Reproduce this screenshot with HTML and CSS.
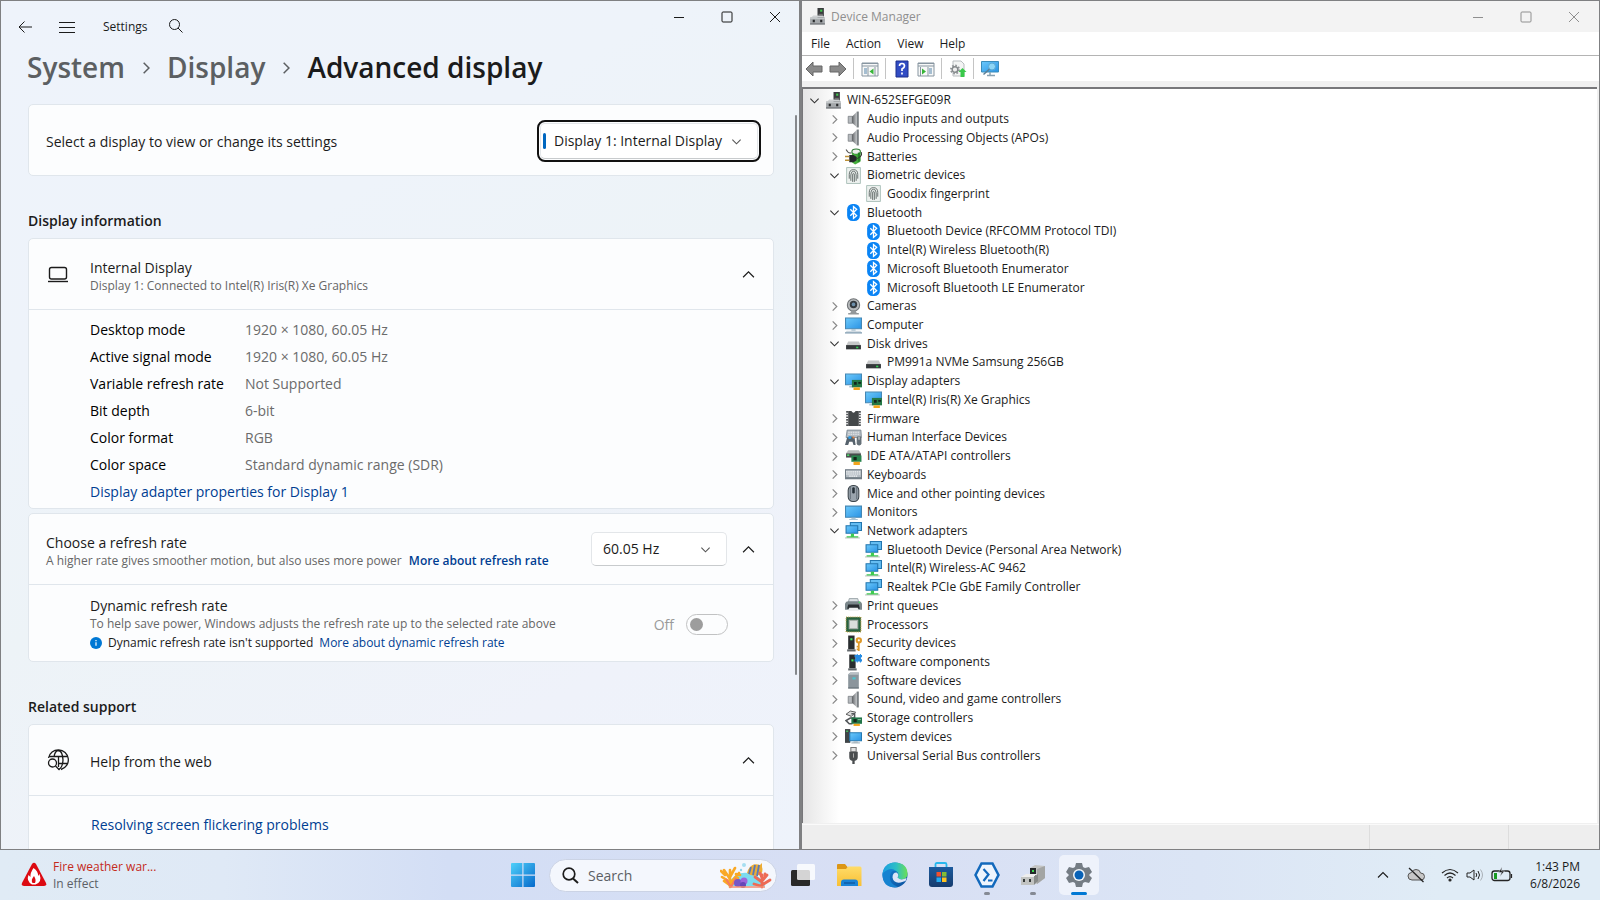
FILE: index.html
```html
<!DOCTYPE html>
<html lang="en">
<head>
<meta charset="utf-8">
<title>Desktop</title>
<link rel="stylesheet" href="styles.css">
</head>
<body>
<svg class="sprite" aria-hidden="true">
  <defs>
    <linearGradient id="gScreen" x1="0" y1="0" x2="1" y2="1"><stop offset="0" stop-color="#6cc9fb"/><stop offset="1" stop-color="#2a93e4"/></linearGradient>
    <linearGradient id="gMetal" x1="0" y1="0" x2="1" y2="0"><stop offset="0" stop-color="#5d6063"/><stop offset="1" stop-color="#c3c6c9"/></linearGradient>
    <linearGradient id="gStart" x1="0" y1="0" x2="1" y2="1"><stop offset="0" stop-color="#4fd0fa"/><stop offset="1" stop-color="#0669cb"/></linearGradient>
    <linearGradient id="gFolder" x1="0" y1="0" x2="0" y2="1"><stop offset="0" stop-color="#ffdc68"/><stop offset="1" stop-color="#f8bf35"/></linearGradient>
    <linearGradient id="gEdge" x1="0" y1="0" x2="1" y2="0"><stop offset="0" stop-color="#1b9de2"/><stop offset=".55" stop-color="#2dbfc5"/><stop offset="1" stop-color="#6bdf54"/></linearGradient>
    <linearGradient id="gEdgeLow" x1="0" y1="0" x2="1" y2="1"><stop offset="0" stop-color="#1688d8"/><stop offset="1" stop-color="#0b4f9c"/></linearGradient>
    <linearGradient id="gStore" x1="0" y1="0" x2="0" y2="1"><stop offset="0" stop-color="#1c5b9e"/><stop offset="1" stop-color="#173c6e"/></linearGradient>
  </defs>
  <symbol id="chev-up" viewBox="0 0 12 12"><path d="M1 8.500 6 3.500l5 5" fill="none" stroke="currentColor" stroke-width="1.100"/></symbol>
  <symbol id="chev-down" viewBox="0 0 12 12"><path d="m1.500 4 4.500 4.500L10.500 4" fill="none" stroke="currentColor" stroke-width="1.200"/></symbol>
  <symbol id="chev-right" viewBox="0 0 12 12"><path d="m4 1.500 4.500 4.500L4 10.500" fill="none" stroke="currentColor" stroke-width="1.300"/></symbol>
  <symbol id="win-min" viewBox="0 0 12 12"><path d="M1 6.500h10" stroke="currentColor"/></symbol>
  <symbol id="win-max" viewBox="0 0 12 12"><rect x="1" y="1" width="10" height="10" rx="1" fill="none" stroke="currentColor"/></symbol>
  <symbol id="win-close" viewBox="0 0 12 12"><path d="m1 1 10 10M11 1 1 11" stroke="currentColor"/></symbol>
  <symbol id="i-pc" viewBox="0 0 16 16"><path d="M8 0h6v10H8z" fill="#3a3c3e"/><path d="M10.500 1.500h2v2h-2z" fill="#41c64e"/><path d="M9 6h4" stroke="#777"/><path d="M2 9 4 7h9l2 2z" fill="#cfd2d4"/><path d="M1 9h14v6.500H1z" fill="#a4a8ab"/><path d="M1 9h14v1.500H1z" fill="#c4c8ca"/><path d="M3.500 11h2v2.500h-2zM10.500 11h2v2.500h-2z" fill="#292b2d"/><path d="M1 15h14" stroke="#696d70"/></symbol>
  <symbol id="i-audio" viewBox="0 0 16 16"><path d="M3 5h4v6.500H3z" fill="#b5b9bd" stroke="#777b80" stroke-width=".7"/><path d="M6.500 5.500 11 1v14l-4.500-4z" fill="url(#gMetal)"/><path d="M11 .5h2v15h-2z" fill="#7b8084"/></symbol>
  <symbol id="i-battery" viewBox="0 0 16 16"><ellipse cx="10.500" cy="3.500" rx="4" ry="2.500" fill="#eee" stroke="#2f7d35"/><path d="M6.500 4.500v9l3 2 5-2.500V4.500q-3.500 3-8 0" fill="#46ae3d"/><path d="M12 4.500v9l2.500-1.500V4z" fill="#238228"/><path d="M1 1.500q2 4 5 3" stroke="#555" fill="none"/><path d="M4 6.500h4l3 2v3l-3 2H4z" fill="#24272a"/><path d="M0 8h4M0 11.500h4" stroke="#bd9137" stroke-width="1.300"/><path d="M15.500 4q1 4-4 6" stroke="#333" fill="none"/></symbol>
  <symbol id="i-finger" viewBox="0 0 16 16"><path d="M1.500.5h13v15h-13z" fill="#edf1ef" stroke="#a3bab4" stroke-width=".8"/><path d="M4 11V7q0-4.500 4-4.500T12 7v4M5.500 13V7.500Q5.500 4 8 4t2.500 3.500V13M7.200 14V7.500q0-1.500.8-1.500t.8 1.500V14" fill="none" stroke="#626b69" stroke-width=".9"/></symbol>
  <symbol id="i-bt" viewBox="0 0 16 16"><rect x="2" y="0" width="12" height="16" rx="5" fill="#0a84f5"/><path d="m5 5 6 6-3 2.500v-11L11 5l-6 6" fill="none" stroke="#fff" stroke-width="1.200"/></symbol>
  <symbol id="i-camera" viewBox="0 0 16 16"><circle cx="8" cy="6.500" r="5.800" fill="#b7babc" stroke="#707477"/><circle cx="8" cy="6.200" r="3.500" fill="#34393e"/><circle cx="8" cy="6" r="1.700" fill="#6d8fab"/><path d="m6 12-1 2h6l-1-2zM3 14h10v1.500H3z" fill="#94989a"/></symbol>
  <symbol id="i-computer" viewBox="0 0 16 16"><path d="M.5 1h15v10H.5z" fill="url(#gScreen)" stroke="#4487b4"/><path d="M6 11.500h4v1.500H6z" fill="#aac0cf"/><path d="M1.500 13h13l1.500 2H0z" fill="#d0dae2"/><path d="M0 15h16" stroke="#7291a8"/></symbol>
  <symbol id="i-disk" viewBox="0 0 16 16"><path d="M3 6h10l2 4H1z" fill="#c6c8c9"/><path d="M1 9.500h14v4H1z" fill="#34383a"/><path d="M10.500 11h2v1.500h-2z" fill="#33d355"/></symbol>
  <symbol id="i-display" viewBox="0 0 16 16"><path d="M.5 1h15v10H.5z" fill="url(#gScreen)" stroke="#4487b4"/><path d="M4 13h4" stroke="#91acbf"/><path d="M6.500 6.500H16v7H6.500z" fill="#257846"/><path d="M8.500 8.500h2.500V11H8.500zM12.500 8.500H15V10h-2.500z" fill="#15251c"/><path d="M8 13.500h6V16H8z" fill="#f2a51d"/></symbol>
  <symbol id="i-firmware" viewBox="0 0 16 16"><path d="M3 1h3q2 3 4 0h3v14H3z" fill="#44484a"/><path d="M2 1v14M14 1v14" stroke="#515558" stroke-width="1.800" stroke-dasharray="1.500 1"/></symbol>
  <symbol id="i-hid" viewBox="0 0 16 16"><path d="M2 1h13l.5 7H1z" fill="#b3bbc2" stroke="#72808b" stroke-width=".7"/><path d="M3 3h11M3 5h11" stroke="#e6e9ec" stroke-dasharray="1.500 .7"/><path d="M2 8q4-2 7 0l1 7H8L7 12H4L3 15H0z" fill="#56626c"/><circle cx="4.500" cy="8" r="1.500" fill="#309be1"/><circle cx="8" cy="8" r="1" fill="#e98242"/><rect x="11" y="6.500" width="4.500" height="9" rx="2" fill="#657078"/><path d="M13.200 7v3" stroke="#d3dadd"/></symbol>
  <symbol id="i-ide" viewBox="0 0 16 16"><path d="M3 2h10l2 3H1z" fill="#b9bdbd"/><path d="M1 5h14v4H1z" fill="#484c4d"/><path d="M2 6h2v1.500H2z" fill="#4de06a"/><path d="M6 7h9.500v6H6z" fill="#27844c"/><path d="M8 8.500h3v3H8z" fill="#14261a"/><path d="M8 13h6v3H8z" fill="#f2a51d"/></symbol>
  <symbol id="i-keyboard" viewBox="0 0 16 16"><path d="M0 3h16v9.500H0z" fill="#717c85"/><path d="M1 4h14v6.500H1z" fill="#b5bdc4"/><path d="M1 5.500h14M1 7.500h14M4 9.500h8" stroke="#f2f4f6" stroke-dasharray="1.400 .6"/></symbol>
  <symbol id="i-mouse" viewBox="0 0 16 16"><rect x="3" y=".5" width="10" height="15" rx="4.500" fill="#9aa4ad" stroke="#3c444b"/><path d="M5 1.500v12M11 1.500v12" stroke="#66717a"/><rect x="6.800" y="2" width="2.400" height="6" rx="1.200" fill="#263038"/></symbol>
  <symbol id="i-monitor" viewBox="0 0 16 16"><path d="M.5 2h15v10.500H.5z" fill="url(#gScreen)" stroke="#4487b4"/><path d="M6 13h4v1H6zM4 14h8v1H4z" fill="#abc4d4"/></symbol>
  <symbol id="i-network" viewBox="0 0 16 16"><path d="M5 .5h10.500v7.500H5z" fill="#65bdf2" stroke="#2275ae"/><path d="M1 3.500h11v7H1z" fill="url(#gScreen)" stroke="#2275ae"/><path d="M5.500 11h3v2.500h4V15h-11v-1.500h4z" fill="#3ecb50"/><path d="M0 15h14" stroke="#bac5bd"/></symbol>
  <symbol id="i-printer" viewBox="0 0 16 16"><path d="M4 1.500h8l1 4H3z" fill="#dce1e4" stroke="#849095" stroke-width=".7"/><path d="M0 6q1-2 3-2h10q2 0 3 2v6H0z" fill="#7b878b"/><path d="M3 7h10l1 4H2z" fill="#292e31"/><path d="M4 10h8l1 3H3z" fill="#ebeeee"/><circle cx="13.500" cy="5" r=".8" fill="#47db64"/></symbol>
  <symbol id="i-cpu" viewBox="0 0 16 16"><path d="M1 1h14v14H1z" fill="#28623f" stroke="#c3a74d" stroke-dasharray="1 1"/><path d="M4 4h8v8H4z" fill="#dadddb" stroke="#a5aca8"/></symbol>
  <symbol id="i-security" viewBox="0 0 16 16"><path d="M3 .5h6v13H3z" fill="#292d2f"/><path d="M5 3h2v2H5z" fill="#41e65d"/><path d="M2 14.500h8" stroke="#63696d" stroke-width="2"/><circle cx="13" cy="5" r="2" fill="none" stroke="#df9a2a" stroke-width="2"/><path d="M13 7v8M13 11h-2M13 13.500h-2" stroke="#df9a2a" stroke-width="1.600"/></symbol>
  <symbol id="i-component" viewBox="0 0 16 16"><path d="M4 .5h6v13H4z" fill="#292d2f"/><path d="M6 5h2v2H6z" fill="#41e65d"/><path d="M3 14.500h8" stroke="#63696d" stroke-width="2"/><path d="M9 1h2V0h1v1h2V0h1v1h1v2h-1v2h1v2h-1v1h-1V7h-2v1h-1V7H9V5h1V3H9z" fill="#268be2"/></symbol>
  <symbol id="i-device" viewBox="0 0 16 16"><path d="M5 .5h8v15H3V2z" fill="#8b959c"/><path d="M5 .5h8v2H3z" fill="#b9c0c5"/><path d="M7 5h3v2H7z" fill="#4dc4cf"/><path d="M3 15h10" stroke="#657078"/></symbol>
  <symbol id="i-storage" viewBox="0 0 16 16"><path d="m1 4 4-3 5 1-4 4z" fill="#ddd" stroke="#444" stroke-width=".8"/><path d="M6 3.500h3v4H5L1 10l3 3h3" fill="none" stroke="#54585b" stroke-width="1.500"/><path d="M6 7h10v6H6z" fill="#217548"/><path d="M8 8.500h3v3H8z" fill="#14261a"/><path d="M12 9h3" stroke="#87bc98"/><path d="M8 13h6v2H8z" fill="#f2a51d"/></symbol>
  <symbol id="i-system" viewBox="0 0 16 16"><path d="M0 1h5v13H0z" fill="#404548"/><path d="M1 3h2" stroke="#4de06a"/><path d="M4.500 4.500h11V12h-11z" fill="url(#gScreen)" stroke="#2579b2"/><path d="M8 12.500h4v1H8zM6 13.500h8v1H6z" fill="#acb9c1"/></symbol>
  <symbol id="i-usb" viewBox="0 0 16 16"><path d="M5.500.5h5v4h-5z" fill="#e1e1e1" stroke="#777"/><path d="M4 4.500h8v5q0 3-2.500 3.500h-3Q4 12.500 4 9.500z" fill="#4a4d4f"/><path d="M8 12v4" stroke="#4a4d4f" stroke-width="2.200"/><path d="M8 6v4" stroke="#aaa"/></symbol>
</svg>

<div class="desktop">
  <main class="settings">
    <header class="s-title">
      <button class="plain nav-back" aria-label="Back"><svg width="14" height="14" viewBox="0 0 14 14"><path d="M14 7H1M6.500 1.500 1 7l5.500 5.500" fill="none" stroke="currentColor"/></svg></button>
      <button class="plain nav-menu" aria-label="Navigation"><svg width="16" height="14" viewBox="0 0 16 14"><path d="M0 2.500h16M0 7.500h16M0 12.500h16" stroke="currentColor"/></svg></button>
      <span class="s-name">Settings</span>
      <button class="plain nav-search" aria-label="Search"><svg width="14" height="14" viewBox="0 0 14 14"><circle cx="5.500" cy="5.500" r="5" fill="none" stroke="currentColor"/><path d="m9 9 4.500 4.500" stroke="currentColor"/></svg></button>
      <div class="controls">
        <button aria-label="Minimize"><svg><use href="#win-min"/></svg></button>
        <button aria-label="Maximize"><svg><use href="#win-max"/></svg></button>
        <button aria-label="Close"><svg><use href="#win-close"/></svg></button>
      </div>
    </header>
    <h1 class="crumbs">
      <a href="#system">System</a>
      <svg width="14" height="14"><use href="#chev-right"/></svg>
      <a href="#display">Display</a>
      <svg width="14" height="14"><use href="#chev-right"/></svg>
      <span>Advanced display</span>
    </h1>
    <div class="s-body">
      <section class="card">
        <div class="card-head">
          <label class="grow" for="pick">Select a display to view or change its settings</label>
          <div class="combo focus"><select id="pick"><option>Display 1: Internal Display</option></select><svg><use href="#chev-down"/></svg></div>
        </div>
      </section>

      <h2>Display information</h2>
      <section class="card">
        <div class="card-head">
          <svg class="lead" viewBox="0 0 22 22"><rect x="2.500" y="4.500" width="17" height="11.500" rx="2" fill="none" stroke="currentColor" stroke-width="1.400"/><path d="M1 18.500h20" stroke="currentColor" stroke-width="1.400"/></svg>
          <div class="grow"><div>Internal Display</div><div class="sub">Display 1: Connected to Intel(R) Iris(R) Xe Graphics</div></div>
          <button class="plain fold" aria-label="Collapse display"><svg><use href="#chev-up"/></svg></button>
        </div>
        <div class="details">
          <dl>
            <dt>Desktop mode</dt><dd>1920 × 1080, 60.05 Hz</dd>
            <dt>Active signal mode</dt><dd>1920 × 1080, 60.05 Hz</dd>
            <dt>Variable refresh rate</dt><dd>Not Supported</dd>
            <dt>Bit depth</dt><dd>6-bit</dd>
            <dt>Color format</dt><dd>RGB</dd>
            <dt>Color space</dt><dd>Standard dynamic range (SDR)</dd>
          </dl>
          <a href="#adapter">Display adapter properties for Display 1</a>
        </div>
      </section>

      <section class="card next">
        <div class="card-head">
          <div class="grow"><label for="rate">Choose a refresh rate</label><div class="sub">A higher rate gives smoother motion, but also uses more power <a class="strong" href="#rate-info">More about refresh rate</a></div></div>
          <div class="combo rate"><select id="rate"><option>60.05 Hz</option></select><svg><use href="#chev-down"/></svg></div>
          <button class="plain fold" aria-label="Collapse refresh rate"><svg><use href="#chev-up"/></svg></button>
        </div>
        <div class="dynamic">
          <div class="grow">
            <label for="drr">Dynamic refresh rate</label>
            <div class="sub">To help save power, Windows adjusts the refresh rate up to the selected rate above</div>
            <div class="note"><svg width="12" height="12" viewBox="0 0 12 12"><circle cx="6" cy="6" r="6" fill="#0078d4"/><path d="M6 5.300v3.500M6 3v1.200" stroke="#fff" stroke-width="1.200"/></svg><span>Dynamic refresh rate isn't supported</span><a href="#drr-info">More about dynamic refresh rate</a></div>
          </div>
          <span class="off">Off</span>
          <input id="drr" class="switch" type="checkbox" role="switch" disabled>
        </div>
      </section>

      <h2>Related support</h2>
      <section class="card">
        <div class="card-head">
          <svg class="lead" viewBox="0 0 22 22" fill="none" stroke="currentColor" stroke-width="1.300"><path d="M1.500 9A10 10 0 1 1 14 20.500M1.800 7.500h18.500M11 14.500h9M7 8Q8 1.500 11.500 1.500 15.500 2 16 11q-.5 8-4.500 9.500M11.500 8v10"/><circle cx="5.500" cy="14" r="4"/><path d="m8.500 17 4 4"/></svg>
          <div class="grow">Help from the web</div>
          <button class="plain fold" aria-label="Collapse help"><svg><use href="#chev-up"/></svg></button>
        </div>
        <div class="help"><a href="#flicker">Resolving screen flickering problems</a></div>
      </section>
    </div>
    <div class="scroll-thumb"></div>
  </main>

  <section class="devmgr">
    <header class="d-title">
      <svg class="ico"><use href="#i-pc"/></svg><span>Device Manager</span>
      <div class="controls">
        <button aria-label="Minimize"><svg><use href="#win-min"/></svg></button>
        <button aria-label="Maximize"><svg><use href="#win-max"/></svg></button>
        <button aria-label="Close"><svg><use href="#win-close"/></svg></button>
      </div>
    </header>
    <nav class="menu"><button>File</button><button>Action</button><button>View</button><button>Help</button></nav>
    <div class="tools">
      <button aria-label="Back"><svg width="18" height="18" viewBox="0 0 18 18"><path d="M1 9 8 2v4h9v6H8v4z" fill="#8a8a8a" stroke="#666"/></svg></button>
      <button aria-label="Forward"><svg width="18" height="18" viewBox="0 0 18 18"><path d="m17 9-7-7v4H1v6h9v4z" fill="#8a8a8a" stroke="#666"/></svg></button>
      <i></i>
      <button aria-label="Console tree"><svg width="18" height="18" viewBox="0 0 18 18"><path d="M1 3h16v13H1z" fill="#f7f8f8" stroke="#8795a0"/><path d="M1 3.500h16M1 6h16" stroke="#8795a0"/><path d="M3 9h3M3 11h3M3 13h3" stroke="#5484aa"/><path d="M7 7v9M14 7v9" stroke="#8795a0"/><path d="M12.500 8.500v6L8.500 11.500z" fill="#37b538"/></svg></button>
      <i></i>
      <button aria-label="Help"><svg width="18" height="18" viewBox="0 0 18 18"><path d="M3 1h12v16H3z" fill="#314cc4" stroke="#1c2f8c"/><path d="M6.500 6q0-2.500 2.500-2.500T11.500 6Q11.500 7.500 9 9v2M9 12.500v2" fill="none" stroke="#fff" stroke-width="1.700"/></svg></button>
      <button aria-label="Action pane"><svg width="18" height="18" viewBox="0 0 18 18"><path d="M1 3h16v13H1z" fill="#f7f8f8" stroke="#8795a0"/><path d="M1 3.500h16M1 6h16M11 7v9M3.500 7v9" stroke="#8795a0"/><path d="M12 9h3M12 11h3M12 13h3" stroke="#5484aa"/><path d="M5 8.500v6l4-3z" fill="#37b538"/></svg></button>
      <i></i>
      <button aria-label="Update driver"><svg width="18" height="18" viewBox="0 0 18 18"><path d="M4 1h8l3 3v12H4z" fill="#f3f4f4" stroke="#b9bdc0"/><circle cx="6" cy="9.500" r="4" fill="none" stroke="#909497" stroke-width="2" stroke-dasharray="1.600 1.500"/><circle cx="6" cy="9.500" r="2.800" fill="#eee" stroke="#85898c" stroke-width="1.400"/><path d="m13.500 8 4 4h-2v5h-4v-5h-2z" fill="#39c94a"/></svg></button>
      <i></i>
      <button aria-label="Scan for hardware changes"><svg width="18" height="18" viewBox="0 0 18 18"><path d="M.5 1.500h17v10.500H.5z" fill="url(#gScreen)" stroke="#3b8dbb"/><circle cx="11" cy="6.500" r="3.500" fill="#8ed6f6" stroke="#5aa9d3"/><path d="m8.500 9-6 5.500" stroke="#5d7f95" stroke-width="1.500"/><path d="M9 12v3M6 15.500h8" stroke="#89a1b0" stroke-width="1.500"/></svg></button>
    </div>
    <div class="pane">
      <ul class="tree" role="tree">
        <li class="l0 open"><button aria-label="Collapse"><svg><use href="#chev-down"/></svg></button><svg class="ico"><use href="#i-pc"/></svg><span>WIN-652SEFGE09R</span></li>
        <li><button aria-label="Expand"><svg><use href="#chev-right"/></svg></button><svg class="ico"><use href="#i-audio"/></svg><span>Audio inputs and outputs</span></li>
        <li><button aria-label="Expand"><svg><use href="#chev-right"/></svg></button><svg class="ico"><use href="#i-audio"/></svg><span>Audio Processing Objects (APOs)</span></li>
        <li><button aria-label="Expand"><svg><use href="#chev-right"/></svg></button><svg class="ico"><use href="#i-battery"/></svg><span>Batteries</span></li>
        <li class="open"><button aria-label="Collapse"><svg><use href="#chev-down"/></svg></button><svg class="ico"><use href="#i-finger"/></svg><span>Biometric devices</span></li>
        <li class="l2"><svg class="ico"><use href="#i-finger"/></svg><span>Goodix fingerprint</span></li>
        <li class="open"><button aria-label="Collapse"><svg><use href="#chev-down"/></svg></button><svg class="ico"><use href="#i-bt"/></svg><span>Bluetooth</span></li>
        <li class="l2"><svg class="ico"><use href="#i-bt"/></svg><span>Bluetooth Device (RFCOMM Protocol TDI)</span></li>
        <li class="l2"><svg class="ico"><use href="#i-bt"/></svg><span>Intel(R) Wireless Bluetooth(R)</span></li>
        <li class="l2"><svg class="ico"><use href="#i-bt"/></svg><span>Microsoft Bluetooth Enumerator</span></li>
        <li class="l2"><svg class="ico"><use href="#i-bt"/></svg><span>Microsoft Bluetooth LE Enumerator</span></li>
        <li><button aria-label="Expand"><svg><use href="#chev-right"/></svg></button><svg class="ico"><use href="#i-camera"/></svg><span>Cameras</span></li>
        <li><button aria-label="Expand"><svg><use href="#chev-right"/></svg></button><svg class="ico"><use href="#i-computer"/></svg><span>Computer</span></li>
        <li class="open"><button aria-label="Collapse"><svg><use href="#chev-down"/></svg></button><svg class="ico"><use href="#i-disk"/></svg><span>Disk drives</span></li>
        <li class="l2"><svg class="ico"><use href="#i-disk"/></svg><span>PM991a NVMe Samsung 256GB</span></li>
        <li class="open"><button aria-label="Collapse"><svg><use href="#chev-down"/></svg></button><svg class="ico"><use href="#i-display"/></svg><span>Display adapters</span></li>
        <li class="l2"><svg class="ico"><use href="#i-display"/></svg><span>Intel(R) Iris(R) Xe Graphics</span></li>
        <li><button aria-label="Expand"><svg><use href="#chev-right"/></svg></button><svg class="ico"><use href="#i-firmware"/></svg><span>Firmware</span></li>
        <li><button aria-label="Expand"><svg><use href="#chev-right"/></svg></button><svg class="ico"><use href="#i-hid"/></svg><span>Human Interface Devices</span></li>
        <li><button aria-label="Expand"><svg><use href="#chev-right"/></svg></button><svg class="ico"><use href="#i-ide"/></svg><span>IDE ATA/ATAPI controllers</span></li>
        <li><button aria-label="Expand"><svg><use href="#chev-right"/></svg></button><svg class="ico"><use href="#i-keyboard"/></svg><span>Keyboards</span></li>
        <li><button aria-label="Expand"><svg><use href="#chev-right"/></svg></button><svg class="ico"><use href="#i-mouse"/></svg><span>Mice and other pointing devices</span></li>
        <li><button aria-label="Expand"><svg><use href="#chev-right"/></svg></button><svg class="ico"><use href="#i-monitor"/></svg><span>Monitors</span></li>
        <li class="open"><button aria-label="Collapse"><svg><use href="#chev-down"/></svg></button><svg class="ico"><use href="#i-network"/></svg><span>Network adapters</span></li>
        <li class="l2"><svg class="ico"><use href="#i-network"/></svg><span>Bluetooth Device (Personal Area Network)</span></li>
        <li class="l2"><svg class="ico"><use href="#i-network"/></svg><span>Intel(R) Wireless-AC 9462</span></li>
        <li class="l2"><svg class="ico"><use href="#i-network"/></svg><span>Realtek PCIe GbE Family Controller</span></li>
        <li><button aria-label="Expand"><svg><use href="#chev-right"/></svg></button><svg class="ico"><use href="#i-printer"/></svg><span>Print queues</span></li>
        <li><button aria-label="Expand"><svg><use href="#chev-right"/></svg></button><svg class="ico"><use href="#i-cpu"/></svg><span>Processors</span></li>
        <li><button aria-label="Expand"><svg><use href="#chev-right"/></svg></button><svg class="ico"><use href="#i-security"/></svg><span>Security devices</span></li>
        <li><button aria-label="Expand"><svg><use href="#chev-right"/></svg></button><svg class="ico"><use href="#i-component"/></svg><span>Software components</span></li>
        <li><button aria-label="Expand"><svg><use href="#chev-right"/></svg></button><svg class="ico"><use href="#i-device"/></svg><span>Software devices</span></li>
        <li><button aria-label="Expand"><svg><use href="#chev-right"/></svg></button><svg class="ico"><use href="#i-audio"/></svg><span>Sound, video and game controllers</span></li>
        <li><button aria-label="Expand"><svg><use href="#chev-right"/></svg></button><svg class="ico"><use href="#i-storage"/></svg><span>Storage controllers</span></li>
        <li><button aria-label="Expand"><svg><use href="#chev-right"/></svg></button><svg class="ico"><use href="#i-system"/></svg><span>System devices</span></li>
        <li><button aria-label="Expand"><svg><use href="#chev-right"/></svg></button><svg class="ico"><use href="#i-usb"/></svg><span>Universal Serial Bus controllers</span></li>
      </ul>
    </div>
    <footer class="status"><span></span><span></span><span></span></footer>
  </section>

  <footer class="taskbar">
    <button class="widget">
      <svg width="26" height="26" viewBox="0 0 26 26"><path d="M11 2q2-2.500 4 0l10 19q1 3-2 3H3q-3 0-2-3z" fill="#dc0a12"/><path d="M12.500 6q5 3.500 4.500 8l1.500-2q3 8-4 10.500H11Q5 19 7.500 13l2 2q-.5-4 3-9" fill="#fff"/><path d="M13 14q2.500 4 1 7h-2.500q-2-3 1.500-7" fill="#dc0a12"/></svg>
      <span><b>Fire weather war...</b><small>In effect</small></span>
    </button>
    <div class="apps">
      <button aria-label="Start"><svg viewBox="0 0 26 26"><path d="M2 1h10.300v11.500H1V2q0-1 1-1M13.500 1H24q1 0 1 1v10.500H13.500zM1 13.700h11.300V25H2q-1 0-1-1zM13.500 13.700H25V24q0 1-1 1H13.500z" fill="url(#gStart)"/></svg></button>
      <label class="find">
        <svg width="17" height="17" viewBox="0 0 17 17"><circle cx="7" cy="7" r="5.800" fill="none" stroke="#1c1c1c" stroke-width="1.700"/><path d="m11 11.500 5 4.500" stroke="#1c1c1c" stroke-width="2"/></svg>
        <input type="text" placeholder="Search" aria-label="Search">
        <svg width="52" height="28" viewBox="0 0 52 28"><path d="M8 25q6-17 25-12 10 4 12 12z" fill="#7bdcf0"/><circle cx="24" cy="4" r="2" fill="#a6def1"/><circle cx="21" cy="9" r="1.200" fill="#8fd3ed"/><path d="M10 26V9M10 18 4 9M10 21l-8-5M10 16l5-9M11 21l8-9M4 20l7 5M18 17l-7 7M5 14 1 10M16 13l4 1" stroke="#f9a825" stroke-width="2.600" stroke-linecap="round"/><path d="m11 26-5-8M11 26l5-9" stroke="#f5795f" stroke-width="2"/><circle cx="18" cy="22" r="4" fill="#7657c6"/><circle cx="24" cy="20" r="3.500" fill="#9c66dc"/><circle cx="23" cy="24" r="3" fill="#6547b7"/><path d="M28 9q4-8 12-5l2-2v4q2 5-3 8-7 2-12-2z" fill="#ecac34"/><path d="m31 6-2 7M35 4l-2 10M39 4l-2 11" stroke="#5b78b5" stroke-width="1.800"/><path d="M42 26V14M42 21l-7-5M42 20l5-6M42 24l8-5M41 25l-7-2M42 17l-2-5M45 16v-3" stroke="#ed6b55" stroke-width="2.800" stroke-linecap="round"/><path d="M9 26h36" stroke="#f18d72" stroke-width="1.500"/></svg>
      </label>
      <button aria-label="Task view"><svg viewBox="0 0 26 26"><rect x="1" y="8" width="19" height="16" rx="1.500" fill="#292929"/><rect x="7" y="2" width="18" height="16" rx="1.500" fill="#fff" fill-opacity=".8"/></svg></button>
      <button aria-label="File Explorer"><svg viewBox="0 0 26 26"><path d="M1 3q0-1 1-1h7l2.500 3H17v5H1z" fill="#dc9616"/><path d="M1 7h9l2-2.500h12q1.500 0 1.500 1.500v18H1z" fill="url(#gFolder)"/><path d="M5 24v-3.500q0-3 3-3h11q3 0 3 3V24z" fill="#1a83d6"/><path d="M8 21h11" stroke="#1263ad" stroke-width="1.800"/></svg></button>
      <button aria-label="Edge"><svg viewBox="0 0 26 26"><circle cx="13" cy="13" r="12.500" fill="url(#gEdgeLow)"/><path d="M.5 13Q1 1 13 .5 25.500 1 25.500 12c0 6-9 7-10 3.500 2-2 1-7-4-7Q4 8.500.5 13" fill="url(#gEdge)"/><path d="M1 11Q9 4 14 9q-5-1-6 5-1 8 8 11Q1 27 .5 13z" fill="#1683d1"/><path d="M15.500 15.500q2-3-1-5-4 0-4 5 1 6 8 5l5-1.500q1-2 1-3-6 3-9-.5" fill="#dce5f7"/></svg></button>
      <button aria-label="Store"><svg viewBox="0 0 26 26"><path d="M7.500 6V2.500q0-1.500 1.500-1.500h8q1.500 0 1.500 1.500V6" fill="none" stroke="#27b7ed" stroke-width="1.800"/><path d="M1 5h24v17q0 3-3 3H4q-3 0-3-3z" fill="url(#gStore)"/><path d="M8.500 10H13v4.500H8.500z" fill="#f2502d"/><path d="M14 10h4.500v4.500H14z" fill="#83bd35"/><path d="M8.500 15.500H13V20H8.500z" fill="#24aaf0"/><path d="M14 15.500h4.500V20H14z" fill="#ffc321"/></svg></button>
      <button class="running" aria-label="Configuration designer"><svg viewBox="0 0 26 26"><path d="M7.500 1.500h11L24.500 13l-6 11.500h-11L1.500 13z" fill="#eef5fd" stroke="#1269bc" stroke-width="2.500"/><path d="m9.500 7 5 5.500-5 6.500M14 18.500h4.500" fill="none" stroke="#1269bc" stroke-width="2.200"/></svg></button>
      <button class="running" aria-label="Device Manager"><svg viewBox="0 0 26 26"><path d="m10 6 5-3 10 1v12l-8 6-6-2z" fill="#c4c5c4"/><path d="m17 7 8-3v12l-8 6z" fill="#a3a5a4"/><path d="M10 6h6v10h-6z" fill="#24292a"/><path d="M12 8h2v2h-2z" fill="#3bd64d"/><path d="m1 15 5-3h11l-3 3z" fill="#eee"/><path d="M1 15h13v8H1z" fill="#c1c3c1"/><path d="m14 15 4-3v7l-4 4z" fill="#868987"/><path d="M3 17h2v3H3zM9 17h2v3H9z" fill="#353a39"/></svg></button>
      <button class="active" aria-label="Settings"><svg viewBox="0 0 26 26"><path d="M10 1h6l1 4 2 1 4-1 3 5-3 3 3 3-3 5-4-1-2 1-1 4h-6l-1-4-2-1-4 1-3-5 3-3-3-3 3-5 4 1 2-1z" fill="#747c84"/><circle cx="13" cy="13" r="6" fill="#f3f7fb"/><circle cx="13" cy="13" r="4.500" fill="#0861b6"/></svg></button>
    </div>
    <div class="tray">
      <button class="plain t-up" aria-label="Hidden icons"><svg width="12" height="12"><use href="#chev-up"/></svg></button>
      <button class="plain t-cloud" aria-label="OneDrive"><svg width="18" height="16" viewBox="0 0 18 16"><path d="M5 13q-4 0-4-4 0-3 3.500-3.500Q6 2.500 9 2.500q4 0 4.500 3.500 4 0 4 3.500T14 13z" fill="#c7c7c7" stroke="#555"/><path d="m2 1 14.500 14" stroke="#222" stroke-width="1.300"/></svg></button>
      <button class="plain t-net" aria-label="Network, volume and battery">
        <svg width="18" height="16" viewBox="0 0 18 16" fill="none" stroke="#252525" stroke-width="1.200"><path d="M1 6q8-7 16 0M3.500 8.500q5.500-5 11 0M6 11q3-2.700 6 0"/><circle cx="9" cy="13" r="1" fill="#252525"/></svg>
        <svg width="18" height="16" viewBox="0 0 18 16" fill="none" stroke="#252525"><path d="M1 6v4h3l4 3V3L4 6zM10 6q1.500 2 0 4M12 4q3 4 0 8"/><path d="M14.500 2.500q4 5.500 0 11" stroke="#aab0b7"/></svg>
        <svg width="22" height="16" viewBox="0 0 22 16"><rect x="1" y="4" width="18" height="9.500" rx="2.500" fill="none" stroke="#252525" stroke-width="1.300"/><path d="M3 6h3v6H3z" fill="#189b22"/><path d="M20.500 7v4" stroke="#252525" stroke-width="1.200"/><path d="M11 0 7.500 5.500h3L9 9.500 13.500 4h-3z" fill="#1c1c1c" stroke="#e1ebf5" stroke-width=".5"/></svg>
      </button>
      <button class="plain clock">1:43 PM<br>6/8/2026</button>
    </div>
  </footer>
</div>
</body>
</html>
```

FILE: styles.css
```css
* { box-sizing: border-box; }
body { margin: 0; font-family: "Open Sans", "Noto Sans", sans-serif; font-size: 14px; color: #1b1b1b; overflow: hidden; }
button, select, input { font: inherit; color: inherit; }
button { background: none; border: 0; padding: 0; }
svg { display: block; flex: none; }
a { color: #003e92; text-decoration: none; }
.sprite { position: absolute; width: 0; height: 0; }
.plain { display: grid; place-items: center; }
.grow { flex: 1; }

.desktop { height: 100vh; display: grid; grid-template: minmax(0, 1fr) 50px / 1fr 1fr; }

.controls { display: flex; margin-left: auto; }
.controls button { width: 48px; height: 32px; display: grid; place-items: center; }
.controls svg { width: 12px; height: 12px; }

/* Settings window */
.settings { position: relative; overflow: hidden; border: 1px solid #7f8082; background: linear-gradient(150deg, #eef3fb 0%, #eef3fa 30%, #edf3f7 50%, #eff2fa 78%, #eef3fb 100%); }
.s-title { display: flex; align-items: flex-start; height: 47px; padding-left: 17px; }
.nav-back, .nav-menu, .nav-search, .s-name { height: 52px; }
.nav-menu { margin-left: 27px; }
.nav-search { margin-left: 21px; height: 50px; }
.s-name { margin-left: 28px; font-size: 12px; line-height: 52px; }
.crumbs { display: flex; align-items: center; gap: 14px; margin: 0; padding-left: 26px; height: 38px; font-size: 28px; font-weight: 600; line-height: 38px; }
.crumbs a, .crumbs svg { color: #5c5f62; }
.crumbs svg { margin-top: 2px; }
.s-body { padding: 18px 25px 0 27px; }
.card { border: 1px solid #e0e6ec; border-radius: 5px; background: rgba(255, 255, 255, .8); }
.card.next { margin-top: 4px; }
.card-head { display: flex; align-items: center; min-height: 70px; padding: 0 13px 0 17px; line-height: 20px; }
.card-head .grow { padding-top: 3px; }
.sub { font-size: 12px; line-height: 16px; color: #666; }
.strong { font-weight: 600; margin-left: 4px; }
h2 { margin: 35px 0 7px; font-size: 14px; font-weight: 600; line-height: 20px; }
.lead { width: 22px; height: 22px; margin: 0 21px 0 1px; }
.fold { width: 24px; height: 32px; }
.fold svg { width: 13px; height: 13px; }

.combo { display: grid; grid-template-columns: 1fr 42px; align-items: center; background: #fff; border: 1px solid #e3e6e9; border-bottom-color: #c8cbcd; border-radius: 5px; }
.combo select { grid-area: 1 / 1 / 2 / 3; height: 32px; padding: 0 30px 0 11px; border: 0; background: none; appearance: none; outline: 0; }
.combo svg { grid-area: 1 / 2; justify-self: center; width: 11px; height: 11px; color: #555; pointer-events: none; }
.rate { width: 136px; margin-right: 9px; }
.focus { position: relative; width: 218px; margin: 2px 2px 0 0; outline: 2px solid #111; outline-offset: 1px; height: 36px; }
.focus::before { content: ""; position: absolute; left: 2px; top: 9px; width: 3px; height: 16px; border-radius: 2px; background: #0067c0; }
.focus select { padding-left: 13px; }

.details { border-top: 1px solid #e0e6ec; padding: 6px 0 3px 61px; line-height: 27px; }
dl { margin: 0; display: grid; grid-template-columns: 155px 1fr; }
dt { color: #000; }
dd { margin: 0; color: #6b6b6b; }
.dynamic { display: flex; align-items: center; border-top: 1px solid #e0e6ec; padding: 11px 45px 8px 61px; line-height: 20px; }
.note { display: flex; align-items: center; gap: 6px; font-size: 12px; line-height: 20px; margin-top: 1px; }
.off { color: #9a9a9a; }
.switch { appearance: none; width: 42px; height: 21px; margin: 0 0 0 12px; padding: 3px; border: 1px solid #c1c2c3; border-radius: 11px; display: flex; align-items: center; }
.switch::before { content: ""; width: 13px; height: 13px; border-radius: 50%; background: #9d9d9d; }
.help { border-top: 1px solid #e0e6ec; padding: 19px 0 20px 62px; line-height: 20px; }
.scroll-thumb { position: absolute; right: 2px; top: 114px; width: 2px; height: 66%; background: #85888c; border-radius: 1px; }

/* Device Manager window */
.devmgr { min-width: 0; min-height: 0; display: flex; flex-direction: column; border: 1px solid #7f8082; border-width: 1px 1px 1px 2px; background: #f0f0f0; font-size: 12px; }
.ico { width: 17px; height: 17px; }
.d-title { flex: none; display: flex; align-items: center; height: 31px; padding: 0 1px 0 7px; gap: 5px; background: #f3f3f3; color: #8f8f8f; }
.menu { display: flex; height: 24px; gap: 16px; padding-left: 9px; background: #fff; border-bottom: 1px solid #b4b4b4; }
.tools { display: flex; align-items: center; height: 25px; padding-left: 3px; gap: 6px; background: #fff; }
.tools i { width: 1px; height: 21px; background: #c4c4c4; margin-right: 1px; }
.tools button { width: 18px; }
.pane { flex: 1; min-height: 0; margin: 6px 2px 1px 0; border-top: 2px solid #77777a; border-left: 1px solid #77777a; background: linear-gradient(90deg, #e6e6e6, #fff 36px); }
.tree { height: 100%; margin: 0; padding: 2px 0 58px; list-style: none; display: grid; grid-auto-rows: minmax(0, 1fr); }
.tree li { display: flex; align-items: center; padding-left: 25px; line-height: 18px; white-space: nowrap; }
.tree button { width: 13px; margin-right: 4px; color: #888; display: grid; place-items: center; }
.tree button svg { width: 11px; height: 11px; }
.tree .open button { color: #333; }
.tree .ico { margin-right: 5px; }
.tree .l0 { padding-left: 5px; }
.tree .l2 { padding-left: 62px; }
.status { height: 25px; display: grid; grid-template-columns: 1fr 139px 91px; border-top: 1px solid #fafafa; background: #eee; }
.status span + span { border-left: 1px solid #ddd; }

/* Taskbar */
.taskbar { grid-column: 1 / 3; display: grid; grid-template-columns: 1fr auto 1fr; align-items: center; background: linear-gradient(90deg, #e0ebf5 0, #dfe9f6 14%, #d3def5 28%, #d8dff4 55%, #dbe5f5 75%, #e0ecf6 90%); font-size: 12px; }
.widget { justify-self: start; display: flex; align-items: center; gap: 6px; padding-left: 21px; text-align: left; line-height: 17px; }
.widget b, .widget small { display: block; font-size: 12px; font-weight: 400; }
.widget b { color: #c42b1c; }
.widget small { color: #5c6166; }
.apps { display: flex; align-items: center; gap: 6px; padding-left: 2px; }
.apps > button { position: relative; width: 40px; height: 40px; display: grid; place-items: center; border-radius: 5px; }
.apps > button svg { width: 26px; height: 26px; }
.find { display: flex; align-items: center; width: 228px; height: 33px; padding: 0 4px 0 12px; gap: 9px; border: 1px solid #cbd3e5; border-radius: 17px; background: #f4f7fd; }
.find input { flex: 1; min-width: 0; border: 0; padding: 0; background: none; outline: 0; font-size: 14px; }
.find input::placeholder { color: #5c5f64; opacity: 1; }
.apps > .active { background: #eef2fb; }
.running::after, .active::after { content: ""; position: absolute; bottom: 0; left: 17px; width: 6px; height: 3px; border-radius: 2px; background: #858a94; }
.active::after { left: 12px; width: 16px; background: #0078d4; }
.tray { justify-self: end; display: flex; align-items: center; padding-right: 20px; }
.t-cloud { margin-left: 18px; }
.t-net { display: flex; gap: 7px; margin: 0 17px 0 16px; }
.clock { text-align: right; line-height: 17px; }
```
